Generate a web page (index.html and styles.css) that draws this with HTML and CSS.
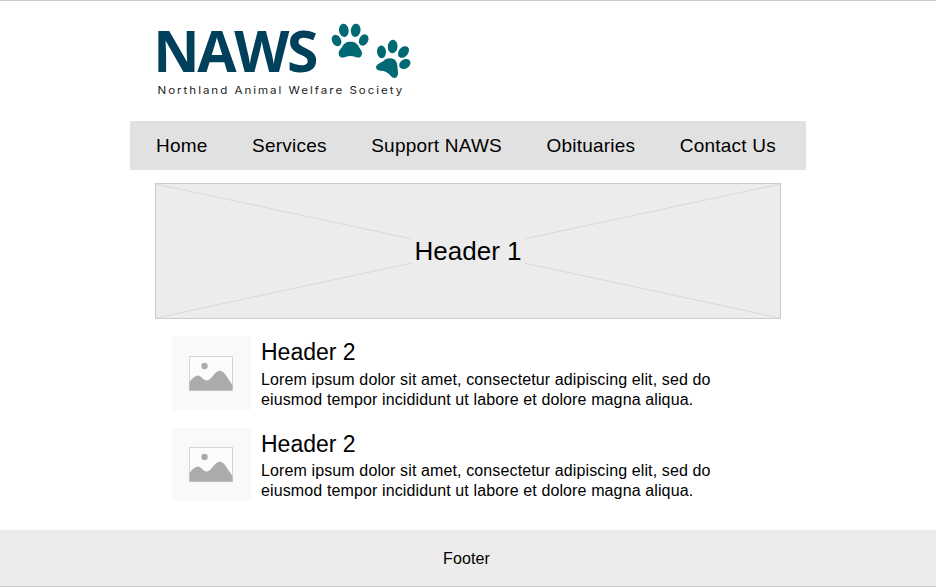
FILE: index.html
```html
<!DOCTYPE html>
<html lang="en">
<head>
<meta charset="utf-8">
<title>Northland Animal Welfare Society</title>
<link rel="stylesheet" href="styles.css">
</head>
<body>
<div class="page">
  <header class="brand">
    <svg class="logo" viewBox="0 0 280 90" role="img" aria-label="NAWS">
      <text class="logo-name" x="3.2" y="57">NAWS</text>
      <text class="logo-tagline" transform="translate(7.5 79) scale(1.1 1)" x="0" y="0" textLength="222.5">Northland Animal Welfare Society</text>
      <g class="paws" transform="translate(175 3) scale(.33333)">
        <ellipse cx="56.5" cy="37" rx="14.5" ry="20" transform="rotate(-8 56.5 37)"/>
        <ellipse cx="92" cy="37" rx="14.5" ry="20" transform="rotate(8 92 37)"/>
        <ellipse cx="34.5" cy="67.5" rx="13.5" ry="18" transform="rotate(-28 34.5 67.5)"/>
        <ellipse cx="116" cy="66" rx="13.5" ry="18" transform="rotate(28 116 66)"/>
        <path d="M76 71C91 71 97 77 102 87C106 94 112 99 111 107C109 118 102 121 92 117Q76 111 61 117C51 121 42 118 41 107C40 99 46 95 51 87C57 77 62 71 76 71Z"/>
        <ellipse cx="169.5" cy="101.5" rx="13.5" ry="19" transform="rotate(-3 169.5 101.5)"/>
        <ellipse cx="203" cy="85.5" rx="14.5" ry="20" transform="rotate(5 203 85.5)"/>
        <ellipse cx="235.5" cy="102" rx="14" ry="19.5" transform="rotate(40 235.5 102)"/>
        <ellipse cx="239.5" cy="138" rx="13.5" ry="18" transform="rotate(60 239.5 138)"/>
        <path d="M196 121C211 122 217 133 217 144C217 153 221 163 218 172C215 182 205 182 197 173C189 163 178 158 167 158C156 158 151 150 154 144C158 137 168 134 175 129C182 123 188 120 196 121Z"/>
      </g>
    </svg>
  </header>
  <nav class="nav">
    <a>Home</a><a>Services</a><a>Support NAWS</a><a>Obituaries</a><a>Contact Us</a>
  </nav>
  <section class="hero">
    <svg class="hero-cross" viewBox="0 0 624 134" preserveAspectRatio="none" aria-hidden="true">
      <path d="M0 0L624 134M624 0L0 134"/>
    </svg>
    <h1>Header 1</h1>
  </section>
  <main class="articles">
    <article class="article">
      <div class="thumb">
        <svg viewBox="0 0 44 35" aria-hidden="true">
          <rect class="frame" x=".5" y=".5" width="43" height="34"/>
          <circle cx="15.5" cy="10" r="3.2"/>
          <path d="M.5 26Q5 19.5 9 19.5C12 19.5 14 24.5 18 24.5C22 24.5 26 14.8 30.5 14.8C36 14.8 38 22 43.5 29V34.5H.5Z"/>
        </svg>
      </div>
      <div class="copy">
        <h2>Header 2</h2>
        <p>Lorem ipsum dolor sit amet, consectetur adipiscing elit, sed do eiusmod tempor incididunt ut labore et dolore magna aliqua.</p>
      </div>
    </article>
    <article class="article">
      <div class="thumb">
        <svg viewBox="0 0 44 35" aria-hidden="true">
          <rect class="frame" x=".5" y=".5" width="43" height="34"/>
          <circle cx="15.5" cy="10" r="3.2"/>
          <path d="M.5 26Q5 19.5 9 19.5C12 19.5 14 24.5 18 24.5C22 24.5 26 14.8 30.5 14.8C36 14.8 38 22 43.5 29V34.5H.5Z"/>
        </svg>
      </div>
      <div class="copy">
        <h2>Header 2</h2>
        <p>Lorem ipsum dolor sit amet, consectetur adipiscing elit, sed do eiusmod tempor incididunt ut labore et dolore magna aliqua.</p>
      </div>
    </article>
  </main>
  <footer class="footer">Footer</footer>
</div>
</body>
</html>
```
FILE: styles.css
```css
* { box-sizing: border-box; }
body {
  margin: 0;
  background: #fff;
  color: #000;
  font-family: "Liberation Sans", Arial, sans-serif;
}
h1, h2, p { margin: 0; font-weight: 400; }
.page {
  display: flex;
  flex-direction: column;
  height: 587px;
  border-top: 1px solid #ccc;
  border-bottom: 1px solid #ccc;
}
.brand {
  width: 676px;
  height: 120px;
  margin: 0 auto;
  padding: 14px 0 0 20px;
}
.logo { display: block; width: 280px; height: 90px; overflow: visible; }
.logo-name { font: 700 57px "Open Sans", sans-serif; letter-spacing: -2.3px; fill: #00405a; }
.logo-tagline { font: 400 10.5px Inter, sans-serif; fill: #222; }
.paws { fill: #006974; }
.nav {
  display: flex;
  align-items: center;
  justify-content: space-between;
  width: 676px;
  height: 49px;
  margin: 0 auto;
  padding: 0 30px 0 26px;
  background: #e1e1e1;
  font-size: 19px;
  letter-spacing: .22px;
}
.hero {
  display: grid;
  place-items: center;
  width: 626px;
  height: 136px;
  margin: 13px auto 0;
  border: 1px solid #ccc;
  background: #ececec;
}
.hero > * { grid-area: 1 / 1; }
.hero-cross { width: 624px; height: 134px; fill: none; stroke: #d8d8d8; }
.hero h1 {
  z-index: 1;
  padding: 0 4px;
  background: #ececec;
  font-size: 26px;
  line-height: 30px;
}
.articles {
  display: grid;
  row-gap: 18px;
  width: 592px;
  margin: 17px auto 0;
}
.article { display: flex; gap: 10px; height: 74px; }
.article + .article { height: 73px; }
.thumb {
  display: grid;
  place-items: center;
  flex: 0 0 79px;
  background: #f9f9f9;
}
.thumb svg { width: 44px; height: 35px; fill: #ababab; }
.thumb .frame { fill: #fcfcfc; stroke: #d5d5d5; }
.thumb { padding-right: 1px; }
.copy { width: 460px; }
.copy h2 { font-size: 23px; line-height: 32px; }
.copy p { margin-top: 2px; font-size: 16px; line-height: 20px; letter-spacing: .12px; }
.article + .article p { margin-top: 1px; }
.footer {
  display: flex;
  align-items: center;
  justify-content: center;
  height: 56px;
  margin-top: auto;
  padding: 2px 3px 0 0;
  background: #ececec;
  font-size: 16px;
  letter-spacing: .1px;
}
```
